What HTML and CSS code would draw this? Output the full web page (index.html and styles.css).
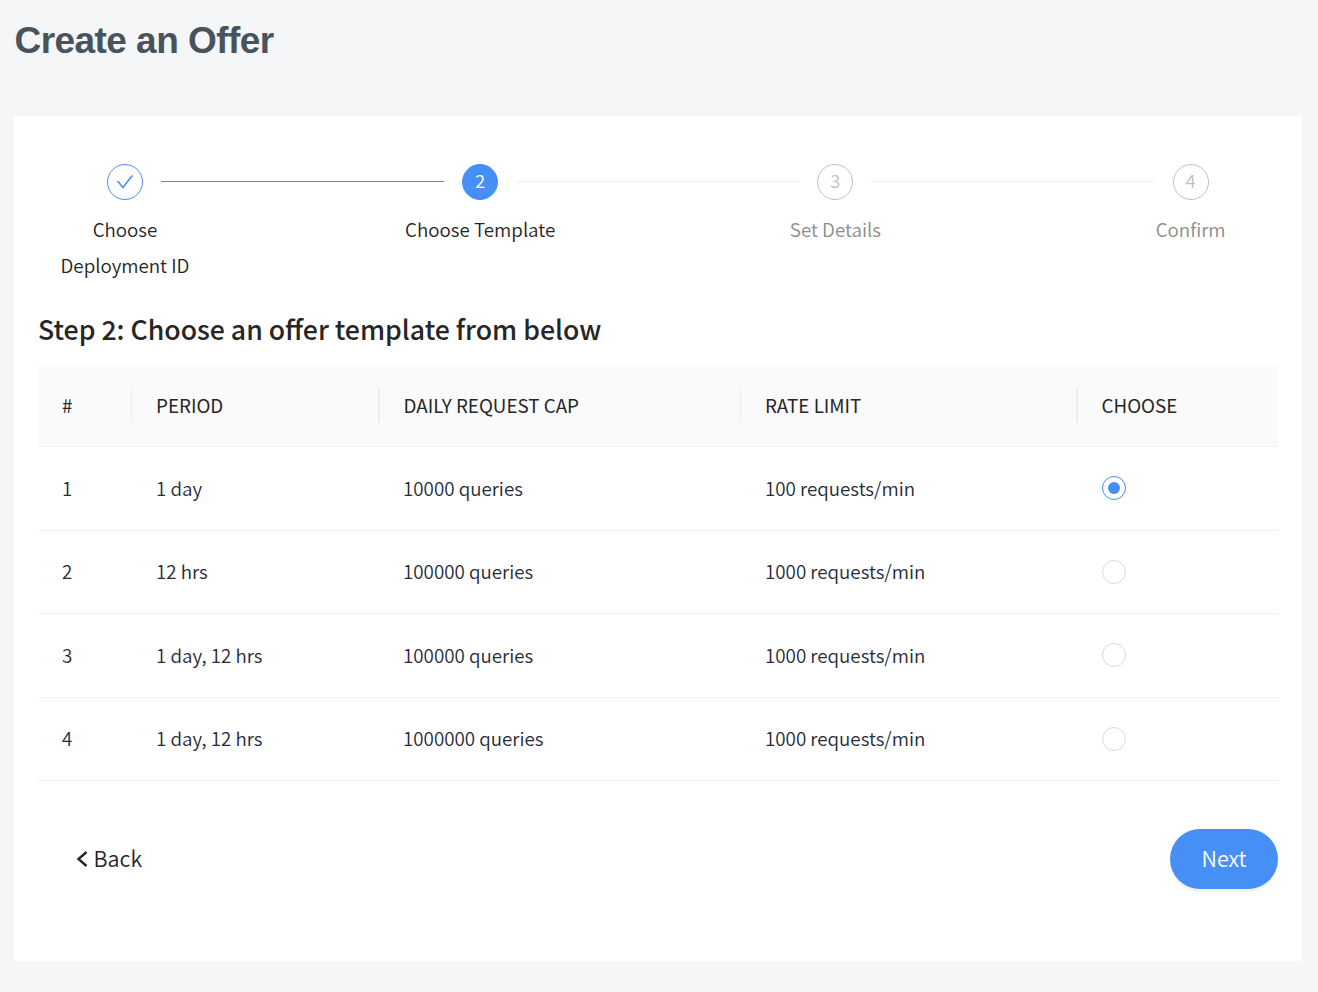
FILE: index.html
```html
<!DOCTYPE html>
<html lang="en">
<head>
<meta charset="utf-8">
<title>Create an Offer</title>
<link rel="stylesheet" href="styles.css">
</head>
<body>
<h1 class="page-title">Create an Offer</h1>
<main class="card">
  <ol class="steps">
    <li class="step done">
      <div class="step-head"><span class="step-icon"><svg width="18" height="18" viewBox="64 64 896 896" fill="currentColor"><path d="M912 190h-69.900c-9.800 0-19.100 4.500-25.100 12.200L404.700 724.500 207 474a32 32 0 0 0-25.100-12.200H112c-6.700 0-10.400 7.700-6.300 12.900l273.900 347c12.800 16.200 37.400 16.200 50.300 0l488.400-618.900c4.100-5.100.4-12.800-6.300-12.800z"/></svg></span><span class="line"></span></div>
      <div class="step-label">Choose Deployment ID</div>
    </li>
    <li class="step active">
      <div class="step-head"><span class="step-icon"><span class="num">2</span></span><span class="line"></span></div>
      <div class="step-label">Choose Template</div>
    </li>
    <li class="step">
      <div class="step-head"><span class="step-icon"><span class="num">3</span></span><span class="line"></span></div>
      <div class="step-label">Set Details</div>
    </li>
    <li class="step last">
      <div class="step-head"><span class="step-icon"><span class="num">4</span></span></div>
      <div class="step-label">Confirm</div>
    </li>
  </ol>
  <h2 class="subtitle">Step 2: Choose an offer template from below</h2>
  <div class="table">
    <div class="row head"><div>#</div><div>PERIOD</div><div class="wide">DAILY REQUEST CAP</div><div>RATE LIMIT</div><div class="wide">CHOOSE</div></div>
    <div class="row"><div>1</div><div>1 day</div><div>10000 queries</div><div>100 requests/min</div><div><span class="radio checked"></span></div></div>
    <div class="row"><div>2</div><div>12 hrs</div><div>100000 queries</div><div>1000 requests/min</div><div><span class="radio"></span></div></div>
    <div class="row"><div>3</div><div>1 day, 12 hrs</div><div>100000 queries</div><div>1000 requests/min</div><div><span class="radio"></span></div></div>
    <div class="row"><div>4</div><div>1 day, 12 hrs</div><div>1000000 queries</div><div>1000 requests/min</div><div><span class="radio"></span></div></div>
  </div>
  <div class="actions">
    <button class="back"><svg width="12" height="16" viewBox="0 0 12 16" fill="none" stroke="currentColor" stroke-width="2.4"><path d="M10.500 1 2.500 8l8 7"/></svg><span>Back</span></button>
    <button class="next">Next</button>
  </div>
</main>
</body>
</html>
```
FILE: styles.css
```css
* { box-sizing: border-box; }
body {
  margin: 0;
  padding: 17px 16px 31px 14px;
  height: 992px;
  background: #f4f6f8;
  color: #262626;
  font: 350 18.75px/36px "Noto Sans CJK SC", sans-serif;
}
.page-title {
  margin: 0 0 51px;
  padding-left: 0.5px;
  color: #49535b;
  font: bold 37px/48px "Liberation Sans", Arial, sans-serif;
  letter-spacing: -0.55px;
}
.card { height: 845px; padding: 48px 24px; background: #fff; }
.steps { display: flex; height: 132px; margin: 0; padding: 0; list-style: none; }
.step { flex: 0 0 355.2px; color: #8c8c8c; }
.step.last { flex-basis: 174px; }
.step.done, .step.active { color: #262626; }
.step-head { display: flex; height: 36px; padding-left: 69px; }
.step-icon {
  display: flex;
  flex: none;
  align-items: center;
  justify-content: center;
  width: 36px;
  height: 36px;
  border: 1px solid #bfbfbf;
  border-radius: 50%;
  color: #bfbfbf;
}
.num { padding-bottom: 4px; font-size: 18.5px; line-height: 30px; }
.done .step-icon { border-color: #458ff7; color: #458ff7; }
.active .step-icon { border-color: #458ff7; background: #458ff7; color: #fff; }
.line { flex: 1; height: 1px; margin: 17px -51px 0 18px; background: #f0f0f0; }
.done .line { background: #458ff7; }
.step-label { width: 174px; margin-top: 11px; padding: 0 20px; text-align: center; }
.active .step-label { padding: 0; }
.subtitle { margin: 13px 0 17px; font-size: 26.65px; font-weight: 500; line-height: 39px; }
.table { display: grid; grid-template-rows: 82px 84px 83px 84px 83px; }
.row {
  display: grid;
  grid-template-columns: 94px 247px 362px 336px 1fr;
  align-items: center;
  padding-bottom: 2px;
  border-bottom: 1px solid #f0f0f0;
  color: #272b37;
}
.row > div { padding-left: 24px; }
.row > div:last-child { padding-left: 25px; }
.row:nth-child(odd):not(.head) > div:last-child { padding-top: 1px; }
.row.head { padding-bottom: 1px; }
.row.head > div { line-height: 34px; }
.head { border-radius: 3px 3px 0 0; background: #fafafa; color: #262626; font-size: 18.8px; font-weight: 400; }
.head > div + div { margin-left: -1px; border-left: 1px solid #ececec; }
.row.head > .wide { padding-left: 23.5px; border-left-width: 2px; }
.radio {
  display: flex;
  align-items: center;
  justify-content: center;
  width: 24px;
  height: 24px;
  border: 1px solid #d9d9d9;
  border-radius: 50%;
}
.radio.checked { border-color: #458ff7; }
.radio.checked::after { content: ""; width: 12px; height: 12px; border-radius: 50%; background: #458ff7; }
.actions { display: flex; align-items: center; justify-content: space-between; margin-top: 48px; padding-left: 38px; }
button { padding: 0; border: 0; font: 350 21.5px/32px "Noto Sans CJK SC", sans-serif; }
.back { display: flex; align-items: center; gap: 5.5px; background: none; color: #262626; }
.back span { padding-bottom: 2px; }
.next { width: 108px; height: 60px; padding-bottom: 2px; border-radius: 30px; background: #458ff7; color: #fff; box-shadow: 0 3px 0 #f4f4f5; }
```
